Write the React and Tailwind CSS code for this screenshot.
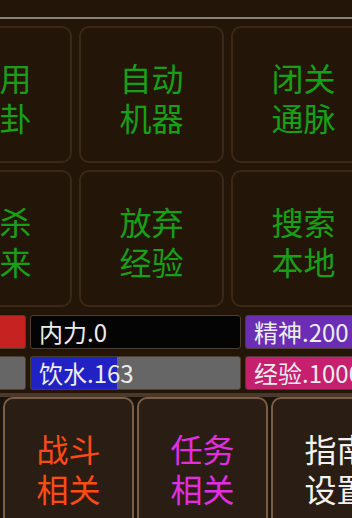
import React from 'react'

const cells = [
  [
    { top: '使用', bottom: '八卦' },
    { top: '自动', bottom: '机器' },
    { top: '闭关', bottom: '通脉' }
  ],
  [
    { top: '追杀', bottom: '回来' },
    { top: '放弃', bottom: '经验' },
    { top: '搜索', bottom: '本地' }
  ]
]

const water = { value: 163, max: 400 }

const StatCell = ({ label, bg, children }) => (
  <div className={`relative w-[211px] h-[34px] shrink-0 rounded-[3px] border border-[#4d3f2f] overflow-hidden ${bg}`}>
    {children}
    <div className="relative pl-[8px] text-[24px] leading-[32px] text-[#ededed] whitespace-nowrap">
      {label}
    </div>
  </div>
)

const App = () => {
  const fill = Math.round((water.value / water.max) * 211)

  return (
    <div className="w-[352px] h-[518px] overflow-hidden bg-[#231609] font-['Noto_Sans_CJK_SC',sans-serif]">
      <div className="h-[17px]" />
      <div className="h-[2px] bg-[#8a8378]" />

      {/* action grid */}
      <div className="pt-[7px] flex flex-col gap-[7px] ml-[-73px]">
        {cells.map((row, i) => (
          <div key={i} className="flex gap-[7px]">
            {row.map((c) => (
              <div
                key={c.top}
                className="w-[145px] h-[137px] shrink-0 rounded-[10px] border-2 border-[#3b2817] flex flex-col items-center justify-center text-[32px] leading-[40px] text-[#17a017] pt-[4px]"
              >
                <span>{c.top}</span>
                <span>{c.bottom}</span>
              </div>
            ))}
          </div>
        ))}
      </div>

      {/* stats */}
      <div className="mt-[8px] flex flex-col gap-[7px] ml-[-185px]">
        <div className="flex gap-[4px]">
          <StatCell label="气血.100" bg="bg-[#c72222]" />
          <StatCell label="内力.0" bg="bg-[#050404]" />
          <StatCell label="精神.200" bg="bg-[#6a2db4]" />
        </div>
        <div className="flex gap-[4px]">
          <StatCell label="饱食.120" bg="bg-[#666666]" />
          <StatCell label="饮水.163" bg="bg-[#666666]">
            <div className="absolute left-0 top-0 bottom-0 bg-[#2222c4]" style={{ width: fill }} />
          </StatCell>
          <StatCell label="经验.1000" bg="bg-[#c61f6d]" />
        </div>
      </div>

      {/* bottom tabs */}
      <div className="mt-[3px] h-[4px] bg-[#4b3a2b]" />
      <div className="flex gap-[3px] pl-[3px] bg-[#1c140c]">
        <div className="w-[131px] h-[130px] shrink-0 rounded-t-[10px] border-2 border-[#7b5e47] bg-[#2a1e14] flex flex-col items-center pt-[29px] text-[32px] leading-[40px] text-[#ff4a16]">
          <span>战斗</span>
          <span>相关</span>
        </div>
        <div className="w-[131px] h-[130px] shrink-0 rounded-t-[10px] border-2 border-[#7b5e47] bg-[#2a1e14] flex flex-col items-center pt-[29px] text-[32px] leading-[40px] text-[#e22ee2]">
          <span>任务</span>
          <span>相关</span>
        </div>
        <div className="w-[131px] h-[130px] shrink-0 rounded-t-[10px] border-2 border-[#7b5e47] bg-[#2a1e14] flex flex-col items-center pt-[29px] text-[32px] leading-[40px] text-[#f2f2f2]">
          <span>指南</span>
          <span>设置</span>
        </div>
      </div>
    </div>
  )
}

export default App
